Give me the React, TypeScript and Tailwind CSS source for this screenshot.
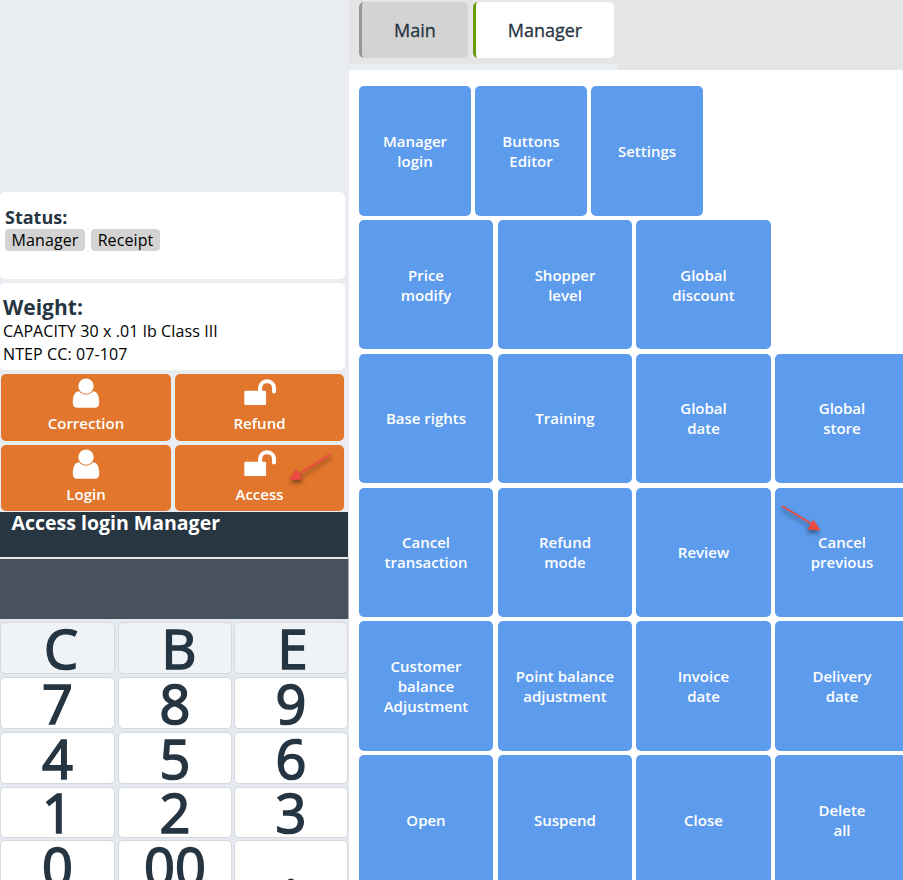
type TileRow = { box: string; tile: string; pad: string; labels: string[] };

const TILE_ROWS: TileRow[] = [
  { box: 'h-[130px] mb-1', tile: 'w-28', pad: '', labels: ['Manager\nlogin', 'Buttons\nEditor', 'Settings'] },
  { box: 'h-[129px] mb-[5px]', tile: '', pad: '', labels: ['Price\nmodify', 'Shopper\nlevel', 'Global\ndiscount'] },
  { box: 'h-[129px] mb-[5px]', tile: '', pad: 'pb-0.5', labels: ['Base rights', 'Training', 'Global\ndate', 'Global\nstore'] },
  { box: 'h-[129px] mb-1', tile: '', pad: 'pb-0.5', labels: ['Cancel\ntransaction', 'Refund\nmode', 'Review', 'Cancel\nprevious'] },
  { box: 'h-[130px] mb-1', tile: '', pad: '', labels: ['Customer\nbalance\nAdjustment', 'Point balance\nadjustment', 'Invoice\ndate', 'Delivery\ndate'] },
  { box: 'h-[130px]', tile: '', pad: '', labels: ['Open', 'Suspend', 'Close', 'Delete\nall'] },
];

const COLUMN = ['w-[134px] mr-[5px]', 'w-[134px] mr-1', 'w-[135px] mr-1', 'w-[134px]'];

const KEY_ROWS = [
  { box: 'h-[52px] mb-[3px]', face: 'bg-[#f0f3f6]', pad: ['pl-[7px]', 'pl-2', 'pl-[3px]'], keys: ['C', 'B', 'E'] },
  { box: 'h-[52px] mb-[3px]', face: 'bg-white', pad: ['', '', ''], keys: ['7', '8', '9'] },
  { box: 'h-[52px] mb-[3px]', face: 'bg-white', pad: ['', '', ''], keys: ['4', '5', '6'] },
  { box: 'h-[51px] mb-[2px]', face: 'bg-white', pad: ['pb-px', 'pb-px', 'pb-px'], keys: ['1', '2', '3'] },
  { box: 'h-[52px]', face: 'bg-white', pad: ['pb-px', 'pb-px', 'pb-0.5'], keys: ['0', '00', '.'] },
];

function UserIcon() {
  return (
    <svg width="28" height="30" viewBox="0 0 28 30" fill="white">
      <path d="M7.2 13.3H20.8C25.3 13.3 27.2 18 27.2 24.4Q27.2 29.7 22.6 29.7H5.4Q.8 29.7.8 24.4C.8 18 2.7 13.3 7.2 13.3Z" />
      <ellipse cx="14" cy="8.4" rx="8.3" ry="8.4" fill="#e1762c" />
      <ellipse cx="14" cy="8.1" rx="7.7" ry="7.7" />
    </svg>
  );
}

function UnlockIcon() {
  return (
    <svg width="34" height="30" viewBox="0 0 34 30" fill="none">
      <rect x="1.3" y="12.7" width="21.8" height="14.4" rx="1.4" fill="white" />
      <path d="M17.1 13V9.3A7 7 0 0 1 31 9.3V13.5" stroke="white" strokeWidth="4" strokeLinecap="round" />
    </svg>
  );
}

function ActionButton({ label, icon, className }: { label: string; icon: 'user' | 'unlock'; className: string }) {
  return (
    <button className={`flex flex-col items-center rounded-[5px] bg-[#e1762c] pt-1 text-[15px] font-semibold leading-5 text-white ${className}`}>
      {icon === 'user' ? <UserIcon /> : <UnlockIcon />}
      <span className="mt-[5px]">{label}</span>
    </button>
  );
}

export default function App() {
  return (
    <div className="relative flex h-[880px] w-[903px] overflow-hidden bg-white font-['Open_Sans',sans-serif] text-[#263542]">
      <aside className="flex w-[349px] shrink-0 flex-col bg-[#e9edf2] pt-48">
        <section className="h-[87px] w-[345px] shrink-0 rounded-[5px] bg-white pl-[5px] pt-[14px]">
          <h2 className="text-lg font-bold leading-[23px]">Status:</h2>
          <div className="flex gap-1.5 text-base leading-[22px] tracking-[0.1px] text-black">
            <span className="w-20 rounded-[4px] bg-[#d3d3d3] text-center">Manager</span>
            <span className="w-[69px] rounded-[4px] bg-[#d3d3d3] text-center">Receipt</span>
          </div>
        </section>
        <section className="mt-1 h-[87px] w-[345px] shrink-0 rounded-[5px] bg-white pl-[3px] pt-[11px]">
          <h2 className="text-[21px] font-bold leading-[26px]">Weight:</h2>
          <p className="text-base leading-[23px] tracking-[0.1px] text-black">CAPACITY 30 x .01 lb Class III</p>
          <p className="text-base leading-[23px] tracking-[0.1px] text-black">NTEP CC: 07-107</p>
        </section>
        <div className="mt-1 flex h-[67px] shrink-0 gap-1 pl-px">
          <ActionButton label="Correction" icon="user" className="w-[170px]" />
          <ActionButton label="Refund" icon="unlock" className="w-[169px]" />
        </div>
        <div className="mt-1 flex h-[66px] shrink-0 gap-1 pl-px">
          <ActionButton label="Login" icon="user" className="w-[170px]" />
          <ActionButton label="Access" icon="unlock" className="w-[169px]" />
        </div>
        <div className="mt-px h-[45px] w-[348px] shrink-0 bg-[#283642] pl-[11.5px] text-[19.5px] font-bold leading-[22px] text-white">
          Access login Manager
        </div>
        <div className="h-[62px] shrink-0 border-r border-t-2 border-r-[#a9adb3] border-t-[#e4e6e8] bg-[#48525d]" />
        <div className="w-full shrink-0 bg-[#e4e9ef] pt-[3px]">
          {KEY_ROWS.map((row, r) => (
            <div key={r} className={`flex ${row.box}`}>
              {row.keys.map((key, c) => (
                <button
                  key={key}
                  className={`flex shrink-0 items-center justify-center rounded-[5px] border border-[#d6d8da] text-[54px] leading-[50px] ${key === '.' ? 'font-semibold' : 'font-normal [-webkit-text-stroke:1.7px_#263542]'} ${row.face} ${row.pad[c]} ${['w-[115px] mr-[3px]', 'w-[114px] mr-0.5', 'w-[114px]'][c]}`}
                >
                  {key}
                </button>
              ))}
            </div>
          ))}
        </div>
      </aside>

      <main className="w-[554px] shrink-0">
        <nav className="h-[70px] bg-[#e5e5e5]">
          <div className="flex h-16 gap-[5px] pl-2.5 pt-0.5 text-lg font-normal [-webkit-text-stroke:0.3px_#263542]">
            <button className="h-14 w-[109px] rounded-[5px] border-l-[3px] border-[#969696] bg-[#d3d3d3]">Main</button>
            <button className="h-14 w-[141px] rounded-[5px] border-l-[3px] border-[#6c9a10] bg-white">Manager</button>
          </div>
          <div className="h-1.5 w-[269px] bg-[#e9edf2]" />
        </nav>
        <div className="pl-2.5 pt-4">
          {TILE_ROWS.map((row, r) => (
            <div key={r} className={`flex ${row.box}`}>
              {row.labels.map((label, c) => (
                <button
                  key={label}
                  className={`shrink-0 whitespace-pre-line rounded-[5px] bg-[#5d9bec] text-[15px] font-semibold leading-5 text-white ${row.pad} ${row.tile ? `mr-1 ${row.tile}` : COLUMN[c]}`}
                >
                  {label}
                </button>
              ))}
            </div>
          ))}
        </div>
      </main>

      <svg className="absolute left-[284px] top-[448px] drop-shadow-[1px_3px_2px_rgba(0,0,0,0.45)]" width="50" height="38" viewBox="0 0 50 38">
        <path d="M46 6.5 15 26" stroke="#ea4b43" strokeWidth="2" />
        <path d="M5 32 12 21 18 31.5Z" fill="#ea4b43" />
      </svg>
      <svg className="absolute left-[778px] top-[502px] drop-shadow-[-1px_3px_2px_rgba(0,0,0,0.45)]" width="46" height="34" viewBox="0 0 46 34">
        <path d="M4 4 34 22" stroke="#ea4b43" strokeWidth="2" />
        <path d="M42.5 28.5 35.5 17.5 29.5 27.5Z" fill="#ea4b43" />
      </svg>
    </div>
  );
}
